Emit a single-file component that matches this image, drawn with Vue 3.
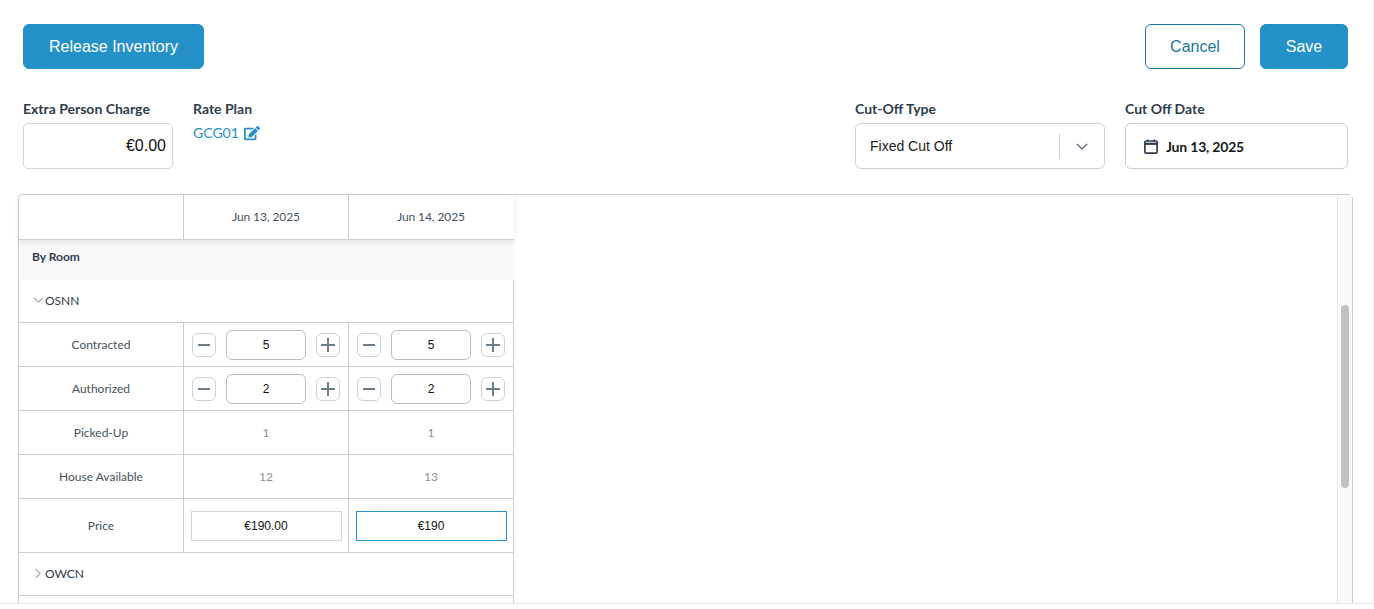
<script setup>
import { ref } from 'vue'

const dates = ['Jun 13, 2025', 'Jun 14, 2025']

const steppers = [
  { label: 'Contracted', values: [5, 5] },
  { label: 'Authorized', values: [2, 2] },
]
const readonly = [
  { label: 'Picked-Up', values: [1, 1] },
  { label: 'House Available', values: [12, 13] },
]
const prices = ref(['€190.00', '€190'])
</script>

<template>
  <div class="page">
    <div class="actions">
      <button class="btn primary release">Release Inventory</button>
      <div class="actions-right">
        <button class="btn outline cancel">Cancel</button>
        <button class="btn primary save">Save</button>
      </div>
    </div>

    <div class="filters">
      <div class="field extra">
        <label>Extra Person Charge</label>
        <input class="charge" value="€0.00" />
      </div>
      <div class="field plan">
        <label>Rate Plan</label>
        <a class="plan-link">GCG01
          <svg class="edit" viewBox="0 0 576 512" fill="currentColor"><path d="M402.6 83.2l90.2 90.2c3.8 3.8 3.8 10 0 13.8L274.4 405.6l-92.8 10.3c-12.4 1.4-22.9-9.1-21.5-21.5l10.3-92.8L388.8 83.2c3.8-3.8 10-3.8 13.8 0zm162-22.9l-48.8-48.8c-15.2-15.2-39.9-15.2-55.2 0l-35.4 35.4c-3.8 3.8-3.8 10 0 13.8l90.2 90.2c3.8 3.8 10 3.8 13.8 0l35.4-35.4c15.2-15.3 15.2-40 0-55.2zM384 346.2V448H64V128h229.8c3.2 0 6.2-1.3 8.5-3.5l40-40c7.6-7.6 2.2-20.5-8.5-20.5H48C21.5 64 0 85.5 0 112v352c0 26.5 21.5 48 48 48h352c26.5 0 48-21.5 48-48V306.2c0-10.7-12.9-16-20.5-8.5l-40 40c-2.2 2.3-3.5 5.3-3.5 8.5z"/></svg>
        </a>
      </div>
      <div class="field cut-type">
        <label>Cut-Off Type</label>
        <div class="select">
          <span class="select-value">Fixed Cut Off</span>
          <span class="select-sep"></span>
          <svg class="select-arrow" viewBox="0 0 12 7" fill="none" stroke="currentColor" stroke-width="1.2"><path d="M.8.8 6 6l5.2-5.2"/></svg>
        </div>
      </div>
      <div class="field cut-date">
        <label>Cut Off Date</label>
        <div class="date">
          <svg class="calendar" viewBox="0 0 14 15" fill="none" stroke="currentColor"><rect x=".9" y="2" width="12.2" height="12.1" rx="1.2" stroke-width="1.7"/><path d="M.8 4.8h12.4" stroke-width="2.2"/><path d="M3.8.4v2M10.2.4v2" stroke-width="1.5"/></svg>
          <span>Jun 13, 2025</span>
        </div>
      </div>
    </div>

    <div class="frame">
      <div class="scroll-area">
        <div class="row head">
          <div class="cell name"></div>
          <div v-for="d in dates" :key="d" class="cell">{{ d }}</div>
        </div>
        <div class="by-room">By Room</div>

        <div class="table-body">
          <div class="group">
            <svg class="chev" viewBox="0 0 12 7" fill="none" stroke="currentColor"><path d="M.8.8 6 6l5.2-5.2"/></svg>
            OSNN
          </div>
          <div v-for="r in steppers" :key="r.label" class="row line">
            <div class="cell name">{{ r.label }}</div>
            <div v-for="(v, i) in r.values" :key="i" class="cell stepper">
              <button class="step">
                <svg viewBox="0 0 14 14" stroke="currentColor" stroke-width="2"><path d="M1 7h12"/></svg>
              </button>
              <input class="qty" :value="v" />
              <button class="step">
                <svg viewBox="0 0 14 14" stroke="currentColor" stroke-width="2"><path d="M0 7h14M7 0v14"/></svg>
              </button>
            </div>
          </div>
          <div v-for="r in readonly" :key="r.label" class="row line">
            <div class="cell name">{{ r.label }}</div>
            <div v-for="(v, i) in r.values" :key="i" class="cell muted">{{ v }}</div>
          </div>
          <div class="row line price-row">
            <div class="cell name">Price</div>
            <div v-for="(p, i) in prices" :key="i" class="cell">
              <input class="price" :class="{ focused: i === 1 }" :value="p" />
            </div>
          </div>
          <div class="group collapsed">
            <svg class="chev right" viewBox="0 0 7 12" fill="none" stroke="currentColor"><path d="M.8.8 6 6 .8 11.2"/></svg>
            OWCN
          </div>
          <div class="group tail"></div>
        </div>
      </div>
      <div class="scrollbar"><div class="thumb"></div></div>
    </div>
  </div>
</template>

<style scoped>
.page {
  height: 604px;
  box-sizing: border-box;
  padding: 24px 25px 0 23px;
  overflow: hidden;
  border-bottom: 1px solid #e8e8e8;
  border-right: 1px solid #eee;
  font-family: Lato, "Liberation Sans", sans-serif;
  color: #2f3d4d;
}

.actions {
  display: flex;
  justify-content: space-between;
}
.actions-right {
  display: flex;
  gap: 15px;
}
.btn {
  height: 45px;
  border-radius: 6px;
  font-family: "Liberation Sans", sans-serif;
  font-size: 16px;
  padding: 0;
}
.primary {
  background: #2491c9;
  border: 1px solid #2491c9;
  color: #fff;
}
.outline {
  background: #fff;
  border: 1px solid #1a76a6;
  color: #1a76a6;
}
.release { width: 181px; }
.cancel { width: 100px; }
.save { width: 88px; }

.filters {
  display: flex;
  margin-top: 30px;
}
.field label {
  display: block;
  font-size: 14px;
  font-weight: 700;
  line-height: 17px;
  height: 23px;
  padding-top: 1px;
  color: #2f3d4d;
}
.extra { width: 150px; }
.plan { margin-left: 20px; flex: 1; }
.cut-type { width: 250px; }
.cut-date { width: 223px; margin-left: 20px; }

.charge {
  width: 150px;
  height: 46px;
  box-sizing: border-box;
  border: 1px solid #d3d6d9;
  border-radius: 5px;
  padding: 0 6px;
  text-align: right;
  font-family: "Liberation Sans", sans-serif;
  font-size: 16px;
  color: #111;
  outline: none;
}
.plan-link {
  display: flex;
  align-items: center;
  gap: 5px;
  padding-top: 1px;
  font-size: 14px;
  line-height: 17px;
  color: #2491c9;
}
.edit { width: 16px; height: 14.2px; margin-top: 2px; }

.select, .date {
  height: 46px;
  box-sizing: border-box;
  display: flex;
  align-items: center;
  border: 1px solid #c9d0d5;
  border-radius: 6px;
}
.select { padding-left: 14px; }
.select-value {
  flex: 1;
  font-family: "Liberation Sans", sans-serif;
  font-size: 14px;
  color: #222;
}
.select-sep {
  width: 1px;
  height: 25px;
  background: #c9d0d5;
}
.select-arrow {
  width: 12px;
  height: 7px;
  margin: 0 16px 0 16px;
  color: #4a5a6a;
}
.date {
  padding-left: 18px;
  gap: 8px;
  font-size: 14px;
  font-weight: 700;
  letter-spacing: -0.2px;
  color: #14181c;
}
.calendar { width: 14px; height: 15px; color: #2f3d4d; }

.frame {
  display: flex;
  width: 1335px;
  height: 500px;
  margin: 25px 0 0 -5px;
  box-sizing: border-box;
  border: 1px solid #c6ced3;
  border-radius: 5px 5px 0 0;
}
.scroll-area {
  flex: 1;
  min-width: 0;
}
.scrollbar {
  width: 15px;
  box-sizing: border-box;
  padding: 110px 3px 0 3px;
  background: #fafafa;
  border-left: 1px solid #e4e4e4;
}
.thumb {
  height: 183px;
  border-radius: 4px;
  background: #c1c1c1;
}

.row {
  display: flex;
  width: 494px;
}
.cell {
  width: 165px;
  flex: none;
  box-sizing: border-box;
  display: flex;
  align-items: center;
  justify-content: center;
  border-left: 1px solid #c6ced3;
  font-size: 12px;
  color: #45525e;
}
.cell.name {
  width: 164px;
  border-left: 0;
}
.head {
  height: 45px;
  width: 495px;
  border-bottom: 1px solid #c6ced3;
  box-sizing: border-box;
  box-shadow: 0 2px 6px rgba(0, 0, 0, 0.09);
  position: relative;
}
.head .cell {
  padding-bottom: 2px;
  letter-spacing: -0.1px;
}
.by-room {
  height: 40px;
  width: 495px;
  box-sizing: border-box;
  padding: 10px 0 0 13px;
  background: #f8f8f8;
  font-size: 12px;
  font-weight: 700;
  line-height: 14px;
}

.table-body {
  width: 495px;
  box-sizing: border-box;
  border-right: 1px solid #c6ced3;
}
.group {
  height: 43px;
  box-sizing: border-box;
  display: flex;
  align-items: center;
  padding: 0 0 2px 14px;
  gap: 1px;
  border-bottom: 1px solid #c6ced3;
  font-size: 12px;
}
.group.collapsed {
  padding-left: 16px;
  gap: 4px;
}
.chev { width: 11px; height: 6px; color: #4a5a6a; }
.chev.right { width: 6px; height: 11px; }
.line {
  height: 44px;
  box-sizing: border-box;
  border-bottom: 1px solid #c6ced3;
}
.price-row { height: 54px; }
.stepper {
  padding: 0 8px;
  justify-content: space-between;
}
.step {
  width: 24px;
  height: 24px;
  flex: none;
  padding: 4px;
  display: flex;
  align-items: center;
  justify-content: center;
  background: #fff;
  border: 1px solid #ccd3d8;
  border-radius: 6px;
  color: #6b7f8c;
}
.step svg { width: 14px; height: 14px; }
.qty {
  width: 80px;
  height: 30px;
  flex: none;
  box-sizing: border-box;
  border: 1px solid #b5bec5;
  border-radius: 6px;
  text-align: center;
  font-family: "Liberation Sans", sans-serif;
  font-size: 12px;
  color: #111;
  outline: none;
}
.cell.muted { color: #8a9299; }
.price {
  width: 151px;
  height: 30px;
  box-sizing: border-box;
  border: 1px solid #d3d6d9;
  text-align: center;
  font-family: "Liberation Sans", sans-serif;
  font-size: 12px;
  color: #111;
  outline: none;
}
.price.focused { border-color: #2491c9; }
</style>

<style>
html, body {
  margin: 0;
  background: #fff;
  overflow: hidden;
}
</style>
